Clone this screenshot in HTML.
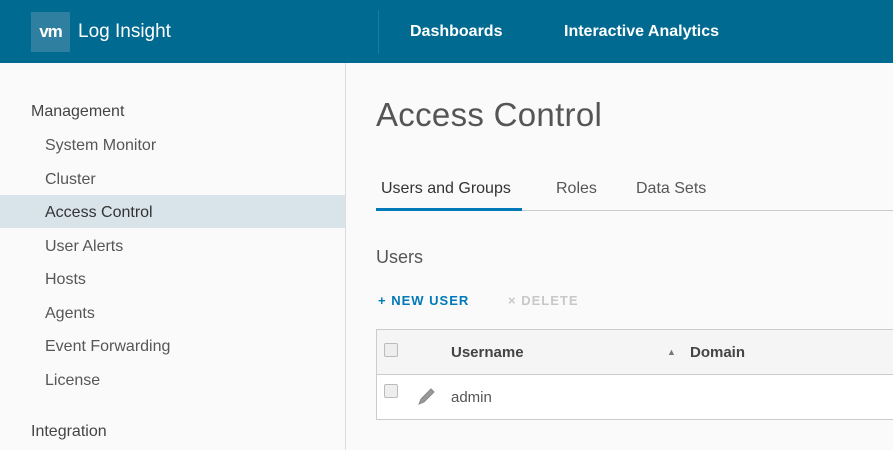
<!DOCTYPE html>
<html><head><style>
body{margin:0;width:893px;height:450px;overflow:hidden;font-family:"Liberation Sans",sans-serif;background:#fafafa;position:relative;color:#565656}
.hd{position:absolute;left:0;top:0;width:893px;height:63px;background:#006a91;color:#fff}
.logo{position:absolute;left:31px;top:12px;width:39px;height:40px;background:#2f7fa1;font-weight:bold;font-size:17px;line-height:40px;text-align:center;letter-spacing:-1px}
.t{position:absolute;font-size:19px;top:21px;left:78px}
.dv{position:absolute;left:378px;top:10px;width:1px;height:44px;background:#1a7aa0}
.nav{position:absolute;top:23px;font-size:16px;font-weight:bold}
.sb{position:absolute;left:0;top:63px;width:345px;height:387px;border-right:1px solid #ddd;background:#fafafa}
.sh{position:absolute;left:31px;font-size:16px;color:#444}
.it{position:absolute;left:0;width:345px;height:33px;line-height:35px;padding-left:45px;box-sizing:border-box;font-size:16px;color:#565656}
.sel{background:#d9e4ea;color:#333}
.a{position:absolute}
</style></head><body>
<div class="hd"><div class="logo">vm</div><div class="t">Log Insight</div><div class="dv"></div>
<div class="nav" style="left:410px">Dashboards</div><div class="nav" style="left:564px">Interactive Analytics</div></div>
<div class="sb">
<div class="sh" style="top:40px">Management</div>
<div class="it" style="top:65px">System Monitor</div>
<div class="it" style="top:99px">Cluster</div>
<div class="it sel" style="top:132px">Access Control</div>
<div class="it" style="top:166px">User Alerts</div>
<div class="it" style="top:199px">Hosts</div>
<div class="it" style="top:233px">Agents</div>
<div class="it" style="top:266px">Event Forwarding</div>
<div class="it" style="top:300px">License</div>
<div class="sh" style="top:360px">Integration</div>
</div>
<div class="a" style="left:376px;top:96px;font-size:33px;color:#555;letter-spacing:0.3px">Access Control</div>
<div class="a" style="left:381px;top:180px;font-size:16px;color:#333">Users and Groups</div>
<div class="a" style="left:556px;top:180px;font-size:16px">Roles</div>
<div class="a" style="left:636px;top:180px;font-size:16px">Data Sets</div>
<div class="a" style="left:376px;top:210px;width:517px;height:1px;background:#ccc"></div>
<div class="a" style="left:376px;top:208px;width:146px;height:3px;background:#0079b8"></div>
<div class="a" style="left:376px;top:247px;font-size:18px">Users</div>
<div class="a" style="left:378px;top:293px;font-size:13px;font-weight:bold;color:#0079b8;letter-spacing:1px">+ NEW USER</div>
<div class="a" style="left:508px;top:293px;font-size:13px;font-weight:bold;color:#c8c8c8;letter-spacing:1px">× DELETE</div>
<div class="a" style="left:376px;top:329px;width:530px;height:91px;border:1px solid #ccc;background:#fff;box-sizing:border-box"></div>
<div class="a" style="left:377px;top:330px;width:520px;height:44px;background:#f5f5f5;border-bottom:1px solid #ccc"></div>
<div class="a" style="left:384px;top:343px;width:12px;height:12px;border:1px solid #bbb;border-radius:2px;background:#eee"></div>
<div class="a" style="left:384px;top:384px;width:12px;height:12px;border:1px solid #bbb;border-radius:2px;background:#eee"></div>
<div class="a" style="left:451px;top:344px;font-size:15px;font-weight:bold;color:#444">Username</div>
<div class="a" style="left:667px;top:347px;font-size:9px;color:#777">▲</div>
<div class="a" style="left:690px;top:344px;font-size:15px;font-weight:bold;color:#444">Domain</div>
<svg class="a" style="left:416px;top:386px" width="22" height="20"><path d="M3 18 L5 13 L15 3 L18 6 L8 16 Z" fill="#999" stroke="#888" stroke-width="1"/></svg>
<div class="a" style="left:451px;top:389px;font-size:15px">admin</div>
</body></html>
